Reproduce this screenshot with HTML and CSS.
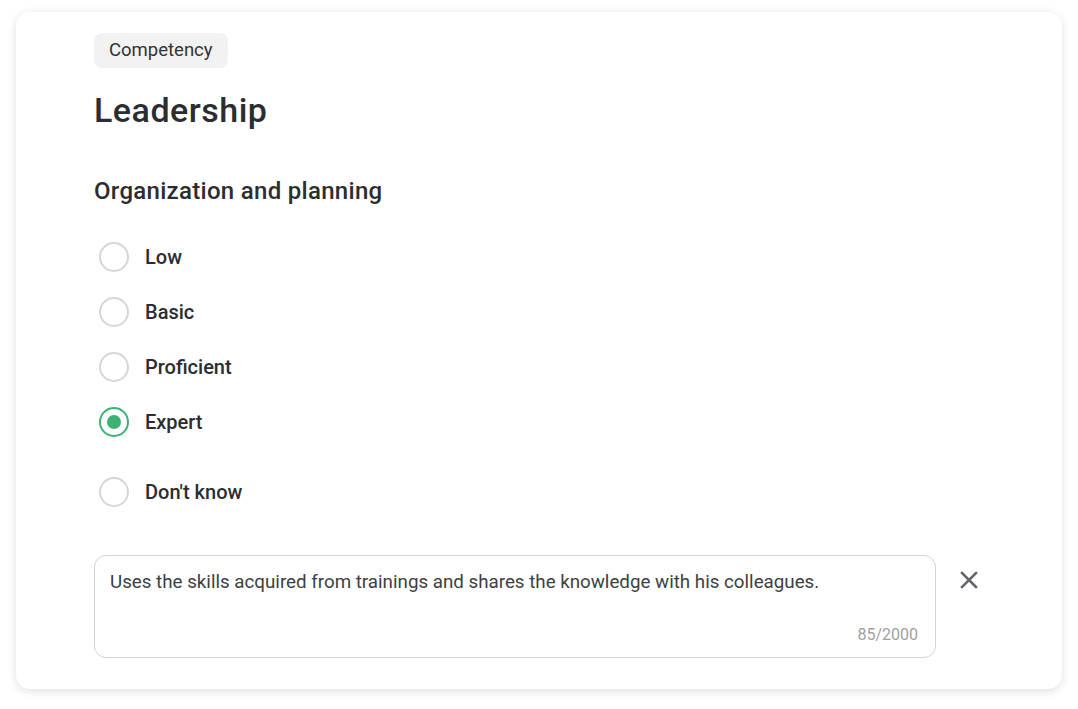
FILE: index.html
```html
<!DOCTYPE html>
<html lang="en">
<head>
    <meta charset="UTF-8">
    <meta name="viewport" content="width=device-width, initial-scale=1.0">
    <title>Competency</title>
    <link rel="stylesheet" href="styles.css">
</head>
<body>
    <div class="card">
        <span class="tag">Competency</span>
        <h1>Leadership</h1>
        <h2>Organization and planning</h2>

        <!-- Pilihan level -->
        <div class="options">
            <label class="option"><span class="radio"></span>Low</label>
            <label class="option"><span class="radio"></span>Basic</label>
            <label class="option"><span class="radio"></span>Proficient</label>
            <label class="option"><span class="radio checked"></span>Expert</label>
            <label class="option dont-know"><span class="radio"></span>Don't know</label>
        </div>

        <!-- Komentar -->
        <div class="comment-row">
            <div class="comment">
                <p>Uses the skills acquired from trainings and shares the knowledge with his colleagues.</p>
                <span class="counter">85/2000</span>
            </div>
            <button class="close-btn" title="Remove">
                <svg width="18" height="18" viewBox="0 0 18 18">
                    <path d="M2 2 L16 16 M16 2 L2 16" stroke="#62656a" stroke-width="2.5" stroke-linecap="square" fill="none"/>
                </svg>
            </button>
        </div>
    </div>
</body>
</html>
```

FILE: styles.css
```css
/* Umum */
body {
    margin: 0;
    padding: 12px 16px 20px;
    background-color: #ffffff;
    font-family: Roboto, "Liberation Sans", sans-serif;
    color: #2b2d30;
}

/* Kartu */
.card {
    background-color: #fff;
    border-radius: 14px;
    box-shadow: 0 2px 10px rgba(0, 0, 0, 0.13);
    padding: 21px 78px 31px;
}

.tag {
    display: inline-block;
    background-color: #f2f2f2;
    border-radius: 8px;
    padding: 7px 15px;
    font-size: 18.5px;
    line-height: 21px;
    color: #333;
}

h1 {
    margin: 22px 0 0;
    font-size: 34px;
    line-height: 40px;
    font-weight: 500;
    letter-spacing: 0.5px;
}

h2 {
    margin: 46px 0 0;
    font-size: 24px;
    line-height: 30px;
    font-weight: 500;
    letter-spacing: 0.3px;
}

/* Pilihan */
.options {
    margin-top: 23px;
}
.option {
    display: flex;
    align-items: center;
    height: 55px;
    font-size: 20px;
    font-weight: 500;
    color: #2b2d30;
    cursor: pointer;
}
.option.dont-know {
    margin-top: 15px;
}
.radio {
    box-sizing: border-box;
    width: 30px;
    height: 30px;
    margin: 0 16px 0 5px;
    border: 2px solid #d6d6d6;
    border-radius: 50%;
    display: flex;
    align-items: center;
    justify-content: center;
}
.radio.checked {
    border-color: #3bb273;
}
.radio.checked::after {
    content: "";
    width: 14px;
    height: 14px;
    border-radius: 50%;
    background-color: #3bb273;
}

/* Komentar */
.comment-row {
    display: flex;
    align-items: flex-start;
    margin-top: 36px;
}
.comment {
    box-sizing: border-box;
    width: 842px;
    height: 103px;
    border: 1px solid #d3d3d3;
    border-radius: 12px;
    padding: 14px 17px 12px 15px;
    display: flex;
    flex-direction: column;
    justify-content: space-between;
}
.comment p {
    margin: 0;
    font-size: 18.75px;
    line-height: 24px;
    color: #3c3f43;
}
.counter {
    align-self: flex-end;
    font-size: 16px;
    line-height: 20px;
    color: #a0a0a0;
}
.close-btn {
    margin: 16px 0 0 24px;
    padding: 0;
    border: none;
    background: none;
    cursor: pointer;
    width: 18px;
    height: 18px;
}
```
